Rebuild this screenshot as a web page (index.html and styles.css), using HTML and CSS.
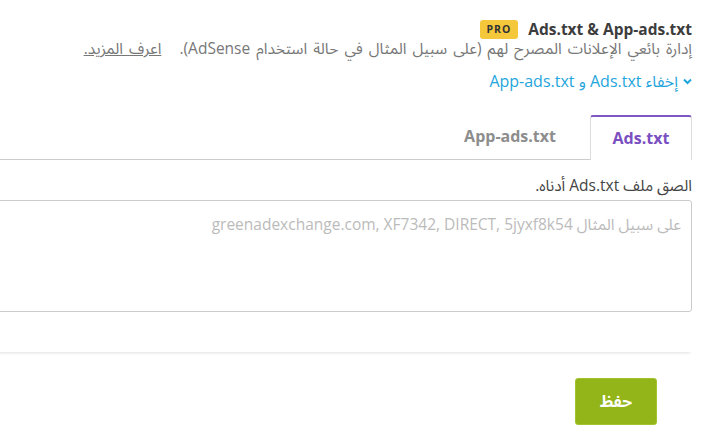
FILE: index.html
```html
<!DOCTYPE html>
<html lang="ar" dir="rtl">
<head>
    <meta charset="UTF-8">
    <title>Ads.txt</title>
    <link rel="stylesheet" href="styles.css">
</head>
<body>
    <div class="page">
        <div class="card">
            <div class="header">
                <div class="title-row">
                    <h2>Ads.txt &amp; App-ads.txt</h2>
                    <span class="badge">PRO</span>
                </div>
                <p class="desc">إدارة بائعي الإعلانات المصرح لهم (على سبيل المثال في حالة استخدام AdSense).&nbsp;&nbsp; <a href="#">اعرف المزيد.</a></p>
                <a href="#" class="toggle">
                    <svg width="9" height="7" viewBox="0 0 9 7"><path d="M1 1.5 L4.5 5 L8 1.5" fill="none" stroke="currentColor" stroke-width="2"/></svg>
                    <span>إخفاء Ads.txt و App-ads.txt</span>
                </a>
            </div>

            <div class="tabs">
                <div class="tab active">Ads.txt</div>
                <div class="tab">App-ads.txt</div>
            </div>

            <div class="tab-body">
                <label for="adsTxt">الصق ملف Ads.txt أدناه.</label>
                <textarea id="adsTxt" placeholder="على سبيل المثال greenadexchange.com, XF7342, DIRECT, 5jyxf8k54"></textarea>
            </div>
        </div>

        <div class="footer">
            <button>حفظ</button>
        </div>
    </div>
</body>
</html>
```

FILE: styles.css
```css
/* Genel */
html, body {
    overflow: hidden;
}

body {
    margin: 0;
    background: #fff;
    font-family: "Open Sans", "Noto Sans Arabic", "DejaVu Sans", sans-serif;
    color: #444;
}

.page {
    width: 820px;
    margin-right: 28px;
}

/* Kart */
.card {
    padding-bottom: 40px;
    box-shadow: 0 3px 3px -2px rgba(0, 0, 0, 0.12);
    margin-left: 2px;
}

.header {
    padding-top: 19px;
}

.title-row {
    display: flex;
    align-items: center;
    gap: 10px;
    height: 21px;
}

.title-row h2 {
    margin: 0;
    font-size: 15.5px;
    line-height: 21px;
    font-weight: 700;
    color: #3d3d3d;
    direction: ltr;
}

.badge {
    background: #f5c83b;
    color: #333;
    font-size: 10.5px;
    font-weight: 700;
    letter-spacing: 1px;
    padding: 3px 7px 3px 6px;
    border-radius: 3px;
    line-height: 13px;
}

.desc {
    margin: 0;
    font-size: 15.5px;
    color: #777;
    line-height: 17px;
    word-spacing: 2px;
}

.desc a {
    color: #777;
}

.toggle {
    display: inline-flex;
    align-items: center;
    gap: 5px;
    margin-top: 14px;
    font-size: 16px;
    line-height: 20px;
    height: 20px;
    color: #1fa5dc;
    text-decoration: none;
}

/* Sekmeler */
.tabs {
    display: flex;
    gap: 12px;
    margin-top: 24px;
    border-bottom: 1px solid #ccc;
}

.tab {
    padding: 0 22px;
    height: 44px;
    line-height: 43px;
    text-align: center;
    font-size: 16px;
    font-weight: 700;
    color: #8d8d8d;
    box-sizing: border-box;
}

.tab.active {
    width: 102px;
    padding: 0;
    color: #7a4fc1;
    border: 1px solid #ddd;
    border-top: 2px solid #7e57c2;
    border-bottom: none;
    border-radius: 3px 3px 0 0;
    background: #fff;
    margin-bottom: -1px;
    height: 45px;
}

.tab-body {
    padding-top: 15px;
}

.tab-body label {
    display: block;
    font-size: 15.5px;
    line-height: 20px;
    color: #444;
    margin-bottom: 5px;
}

.tab-body textarea {
    display: block;
    width: 100%;
    height: 112px;
    box-sizing: border-box;
    border: 1px solid #ccc;
    border-radius: 3px;
    padding: 8px 10px;
    font-family: "Open Sans", "Noto Sans Arabic", "DejaVu Sans", sans-serif;
    font-size: 15.5px;
    resize: none;
}

.tab-body textarea::placeholder {
    color: #bbb;
}

/* Alt kısım */
.footer {
    padding: 26px 35px 0 0;
}

.footer button {
    width: 82px;
    height: 47px;
    background: #93b51a;
    border: 1px solid #a2c22e;
    border-radius: 3px;
    color: #fff;
    font-family: "Open Sans", "Noto Sans Arabic", "DejaVu Sans", sans-serif;
    font-size: 16px;
    font-weight: 700;
    cursor: pointer;
}
```
